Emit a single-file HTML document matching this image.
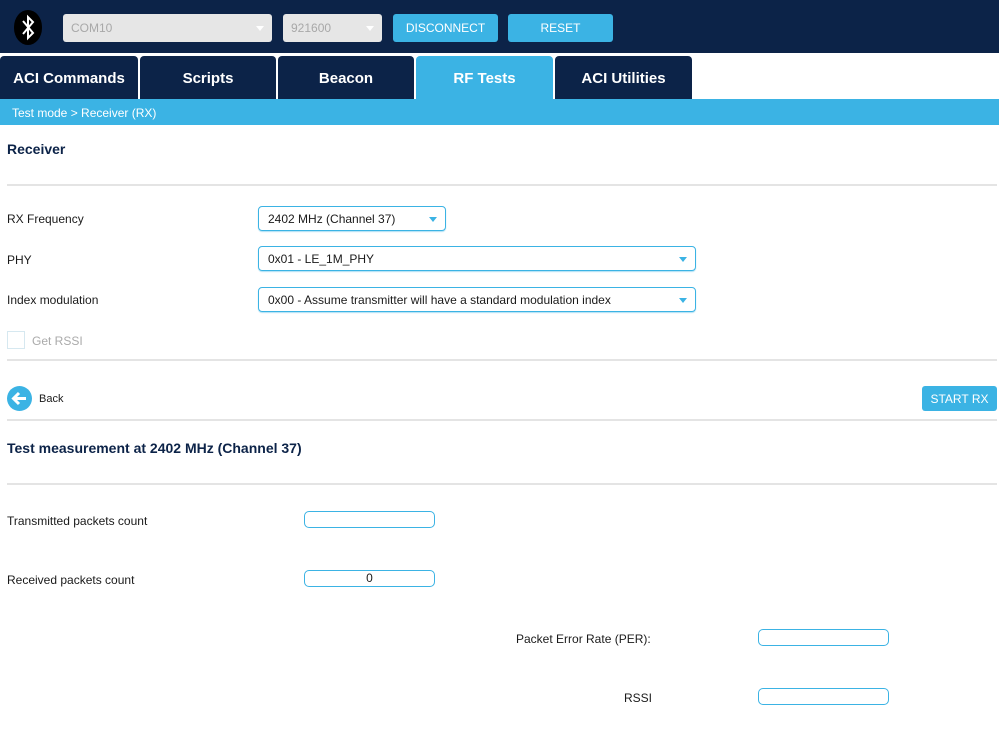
<!DOCTYPE html>
<html><head><style>
body{margin:0;width:999px;height:752px;background:#fff;font-family:"Liberation Sans",sans-serif;position:relative;overflow:hidden;color:#1a1a1a}
.a{position:absolute}
.top{left:0;top:0;width:999px;height:53px;background:#0c2348}
.sel{background:#e6e6e6;border-radius:3px;color:#a8a8a8;font-size:12px;line-height:28px;padding-left:8px;box-sizing:border-box}
.sel:after{content:"";position:absolute;right:8px;top:12px;border:4px solid transparent;border-top:5px solid #fff}
.btn{background:#3bb3e4;color:#fff;font-size:12px;text-align:center;line-height:28px;border-radius:3px}
.tab{top:56px;height:43px;background:#0c2348;color:#fff;font-weight:bold;font-size:15px;text-align:center;line-height:45px;border-radius:4px 4px 0 0}
.hr{left:7px;width:990px;height:2px;background:#e4e4e4}
.lbl{font-size:12px}
.dd{border:1px solid #3bb3e4;border-radius:4px;box-sizing:border-box;height:25px;font-size:12px;line-height:24px;padding-left:9px;box-shadow:0 1px 1px #aee0f4}
.dd:after{content:"";position:absolute;right:8px;top:10px;border:4px solid transparent;border-top:5px solid #3bb3e4}
.in{border:1px solid #3bb3e4;border-radius:5px;box-sizing:border-box;height:17px;width:131px;font-size:12px;text-align:center;line-height:15px}
</style></head><body>
<div class="a top"></div>
<div class="a" style="left:14px;top:10px;width:28px;height:35px;background:#000;border-radius:14px/17px"></div>
<svg class="a" style="left:14px;top:10px" width="28" height="35"><path d="M9 11 L19 23 L14 28 L14 7 L19 12 L9 24" stroke="#fff" stroke-width="2" fill="none"/></svg>
<div class="a sel" style="left:63px;top:14px;width:209px;height:28px">COM10</div>
<div class="a sel" style="left:283px;top:14px;width:99px;height:28px">921600</div>
<div class="a btn" style="left:393px;top:14px;width:105px;height:28px">DISCONNECT</div>
<div class="a btn" style="left:508px;top:14px;width:105px;height:28px">RESET</div>
<div class="a tab" style="left:0;width:138px">ACI Commands</div>
<div class="a tab" style="left:140px;width:136px">Scripts</div>
<div class="a tab" style="left:278px;width:136px">Beacon</div>
<div class="a tab" style="left:416px;width:137px;background:#3bb3e4">RF Tests</div>
<div class="a tab" style="left:555px;width:137px">ACI Utilities</div>
<div class="a" style="left:0;top:99px;width:999px;height:26px;background:#3bb3e4;color:#fff;font-size:12px;line-height:29px;padding-left:12px;box-sizing:border-box">Test mode &gt; Receiver (RX)</div>
<div class="a" style="left:7px;top:141px;font-size:14px;font-weight:bold;color:#0c2348">Receiver</div>
<div class="a hr" style="top:184px"></div>
<div class="a lbl" style="left:7px;top:212px">RX Frequency</div>
<div class="a dd" style="left:258px;top:206px;width:188px">2402 MHz (Channel 37)</div>
<div class="a lbl" style="left:7px;top:253px">PHY</div>
<div class="a dd" style="left:258px;top:246px;width:438px">0x01 - LE_1M_PHY</div>
<div class="a lbl" style="left:7px;top:293px">Index modulation</div>
<div class="a dd" style="left:258px;top:287px;width:438px">0x00 - Assume transmitter will have a standard modulation index</div>
<div class="a" style="left:7px;top:331px;width:18px;height:18px;border:1px solid #d6e8f0;box-sizing:border-box"></div>
<div class="a lbl" style="left:32px;top:334px;color:#aaa">Get RSSI</div>
<div class="a hr" style="top:359px"></div>
<svg class="a" style="left:7px;top:386px" width="25" height="25"><circle cx="12.5" cy="12.5" r="12.5" fill="#3bb3e4"/><path d="M19 12.5H7M12 7l-5.5 5.5L12 18" stroke="#fff" stroke-width="3" fill="none"/></svg>
<div class="a" style="left:39px;top:393px;font-size:11px">Back</div>
<div class="a btn" style="left:922px;top:386px;width:75px;height:25px;line-height:26px">START RX</div>
<div class="a hr" style="top:419px"></div>
<div class="a" style="left:7px;top:440px;font-size:14px;font-weight:bold;color:#0c2348">Test measurement at 2402 MHz (Channel 37)</div>
<div class="a hr" style="top:483px"></div>
<div class="a lbl" style="left:7px;top:514px">Transmitted packets count</div>
<div class="a in" style="left:304px;top:511px"></div>
<div class="a lbl" style="left:7px;top:573px">Received packets count</div>
<div class="a in" style="left:304px;top:570px">0</div>
<div class="a lbl" style="left:516px;top:632px">Packet Error Rate (PER):</div>
<div class="a in" style="left:758px;top:629px"></div>
<div class="a lbl" style="left:624px;top:691px">RSSI</div>
<div class="a in" style="left:758px;top:688px"></div>
</body></html>
